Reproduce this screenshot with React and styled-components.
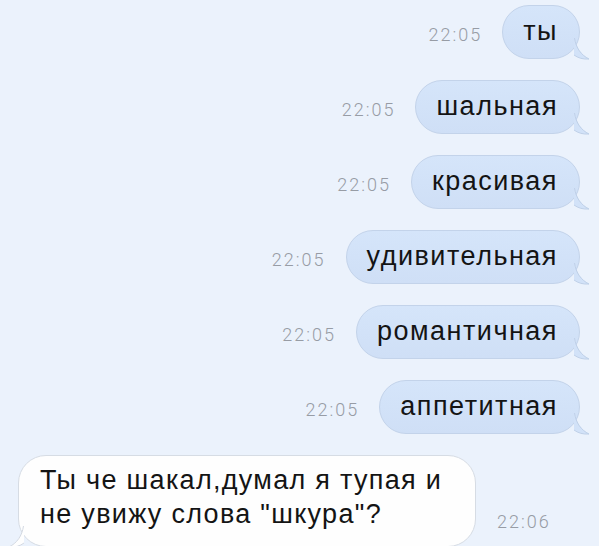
import React from "react";
import styled, { createGlobalStyle } from "styled-components";

const GlobalStyle = createGlobalStyle`
	html, body {
		margin: 0;
		padding: 0;
		background: #ebf2fc;
		overflow: hidden;
	}
`;

const messages = [
	{ id: 1, text: "ты", time: "22:05" },
	{ id: 2, text: "шальная", time: "22:05" },
	{ id: 3, text: "красивая", time: "22:05" },
	{ id: 4, text: "удивительная", time: "22:05" },
	{ id: 5, text: "романтичная", time: "22:05" },
	{ id: 6, text: "аппетитная", time: "22:05" },
];

// хвостик пузыря
const Tail = ({ side, fill, stroke }) => (
	<TailSvg side={side} width="16" height="26" viewBox="0 0 16 26">
		{side === "right" ? (
			<>
				<path d="M0 0 C1 12 6 20 15 25 C9 25.5 4 24 0 21 Z" fill={fill} />
				<path d="M0.5 4 C2 14 7 21 15 25 C9 25.5 4 24 0 21" fill="none" stroke={stroke} strokeWidth="1" />
			</>
		) : (
			<>
				<path d="M16 0 C15 12 10 20 1 25 C7 25.5 12 24 16 21 Z" fill={fill} />
				<path d="M15.5 4 C14 14 9 21 1 25 C7 25.5 12 24 16 21" fill="none" stroke={stroke} strokeWidth="1" />
			</>
		)}
	</TailSvg>
);

export default function App() {
	return (
		<>
			<GlobalStyle />
			<Chat>
				{messages.map((m) => (
					<OutRow key={m.id}>
						<Time>{m.time}</Time>
						<OutBubble>
							{m.text}
							<Tail side="right" fill="#d2e2f8" stroke="#bfd0e8" />
						</OutBubble>
					</OutRow>
				))}
				<InRow>
					<InBubble>
						Ты че шакал,думал я тупая и не увижу слова "шкура"?
						<Tail side="left" fill="#fefefe" stroke="#d3d9e2" />
					</InBubble>
					<Time bottom>22:06</Time>
				</InRow>
			</Chat>
		</>
	);
}

const Chat = styled.div`
	display: flex;
	flex-direction: column;
	gap: 21px;
	padding: 5px 19px 0 0;
	font-family: "Liberation Sans", Arial, sans-serif;
`;

const OutRow = styled.div`
	display: flex;
	justify-content: flex-end;
	align-items: center;
	gap: 20px;
`;

const Time = styled.span`
	font-family: Roboto, "Liberation Sans", sans-serif;
	font-weight: 300;
	font-size: 18px;
	letter-spacing: 2px;
	color: #979ca5;
	padding-top: ${(p) => (p.bottom ? "0" : "4px")};
	margin-bottom: ${(p) => (p.bottom ? "15px" : "0")};
`;

const OutBubble = styled.div`
	position: relative;
	height: 54px;
	box-sizing: border-box;
	display: flex;
	align-items: center;
	padding: 0 21px 2px 20px;
	border-radius: 27px;
	background: linear-gradient(#d5e5fa, #cfdff6);
	border: 1px solid #c3d3ea;
	font-size: 27px;
	letter-spacing: 1.5px;
	color: #141414;
`;

const TailSvg = styled.svg`
	position: absolute;
	bottom: -2px;
	${(p) => (p.side === "right" ? "right: -11px;" : "left: -11px;")}
`;

const InRow = styled.div`
	display: flex;
	align-items: flex-end;
	gap: 21px;
	padding-left: 18px;
`;

const InBubble = styled.div`
	position: relative;
	width: 458px;
	height: 92px;
	box-sizing: border-box;
	padding: 7px 18px 0 21px;
	border-radius: 28px;
	background: #fefefe;
	border: 1px solid #d6dce4;
	font-size: 27px;
	letter-spacing: 1.3px;
	line-height: 34px;
	color: #141414;
`;
